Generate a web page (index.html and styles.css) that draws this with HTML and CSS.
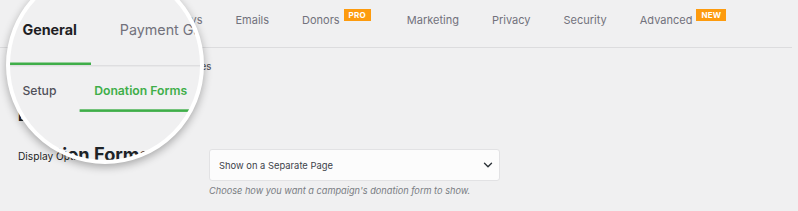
FILE: index.html
```html
<!DOCTYPE html>
<html lang="en">
<head>
<meta charset="utf-8">
<title>Settings</title>
<link rel="stylesheet" href="styles.css">
</head>
<body>
<div class="page">
  <nav class="tabs">
    <a class="tab active">General</a>
    <a class="tab">Payment Gateways</a>
    <a class="tab">Emails</a>
    <a class="tab">Donors<span class="badge">PRO</span></a>
    <a class="tab">Marketing</a>
    <a class="tab">Privacy</a>
    <a class="tab">Security</a>
    <a class="tab">Advanced<span class="badge">NEW</span></a>
  </nav>
  <nav class="subtabs">
    <a class="subtab">Setup</a>
    <a class="subtab active">Donation Forms</a>
    <a class="subtab">Pages</a>
  </nav>
  <h2 class="title">Donation Forms</h2>
  <div class="field">
    <label class="label">Display Options</label>
    <div class="control">
      <div class="select"><span>Show on a Separate Page</span><svg class="chev" width="10" height="6" viewBox="0 0 10 6"><path d="M1.5 1.2l3.5 3.5 3.5-3.5" fill="none" stroke="#2c3338" stroke-width="1.4" stroke-linecap="round" stroke-linejoin="round"/></svg></div>
      <p class="help">Choose how you want a campaign's donation form to show.</p>
    </div>
  </div>
</div>
<div class="lens" aria-hidden="true">
  <div class="lens-view">
    <div class="page">
      <nav class="tabs">
        <a class="tab active">General</a>
        <a class="tab">Payment Gateways</a>
        <a class="tab">Emails</a>
        <a class="tab">Donors<span class="badge">PRO</span></a>
        <a class="tab">Marketing</a>
      </nav>
      <nav class="subtabs">
        <a class="subtab">Setup</a>
        <a class="subtab active">Donation Forms</a>
        <a class="subtab">Pages</a>
      </nav>
      <h2 class="title">Donation Forms</h2>
      <div class="field">
        <label class="label">Display Options</label>
        <div class="control">
          <div class="select"><span>Show on a Separate Page</span></div>
        </div>
      </div>
    </div>
  </div>
</div>
</body>
</html>
```
FILE: styles.css
```css
html, body {
  margin: 0;
  padding: 0;
}
body {
  background: #f0f0f1;
  font-family: Inter, "Noto Sans", sans-serif;
  position: relative;
  height: 211px;
  overflow: hidden;
}
.page {
  width: 798px;
}
.tabs {
  display: flex;
  gap: 11px;
  padding-left: 17px;
  margin-right: 6px;
  border-bottom: 1px solid #dcdcde;
}
.tab {
  display: flex;
  align-items: flex-start;
  box-sizing: border-box;
  height: 47px;
  padding: 12px 11px 0;
  font-size: 11px;
  line-height: 16px;
  color: #72727c;
  white-space: nowrap;
}
.tab.active {
  color: #1e1e24;
  font-weight: 700;
  box-shadow: inset 0 -2px 0 #3fae49;
}
.badge {
  margin-left: 4px;
  margin-top: -3px;
  margin-right: 3px;
  height: 12px;
  line-height: 12px;
  padding: 0 5px;
  background: #fd9b0e;
  color: #fff;
  font-size: 8px;
  font-weight: 700;
  letter-spacing: 0.2px;
}
.subtabs {
  display: flex;
  gap: 7px;
  padding-left: 17px;
}
.subtab {
  padding: 11px 11px 6px;
  border-bottom: 2px solid transparent;
  font-size: 9.4px;
  line-height: 16px;
  font-weight: 500;
  color: #50505a;
  white-space: nowrap;
}
.subtab.active {
  color: #3fae49;
  font-weight: 600;
  border-bottom-color: #3fae49;
}
.title {
  margin: 24px 0 0 18px;
  font-size: 14px;
  line-height: 18px;
  font-weight: 700;
  color: #1d2327;
}
.field {
  display: flex;
  margin-top: 24px;
  padding-left: 18px;
}
.label {
  width: 191px;
  font-size: 10.2px;
  line-height: 14px;
  color: #1e1e1e;
}
.select {
  box-sizing: border-box;
  width: 291px;
  height: 32px;
  display: flex;
  align-items: center;
  justify-content: space-between;
  padding: 0 6px 0 9px;
  background: #fcfcfc;
  border: 1px solid #e2e2e4;
  border-radius: 3px;
  font-size: 9.4px;
  color: #3c434a;
}
.help {
  margin: 3px 0 0;
  font-size: 9.2px;
  line-height: 14px;
  font-style: italic;
  color: #787c82;
}
.lens {
  position: absolute;
  left: 6px;
  top: -34px;
  width: 190px;
  height: 190px;
  border: 4px solid #fff;
  border-radius: 50%;
  overflow: hidden;
  background: #f0f0f1;
  box-shadow: 0 3px 9px rgba(0, 0, 0, 0.3);
}
.lens-view {
  position: absolute;
  left: -24px;
  top: 34px;
  transform: scale(1.3);
  transform-origin: 0 0;
}
```
